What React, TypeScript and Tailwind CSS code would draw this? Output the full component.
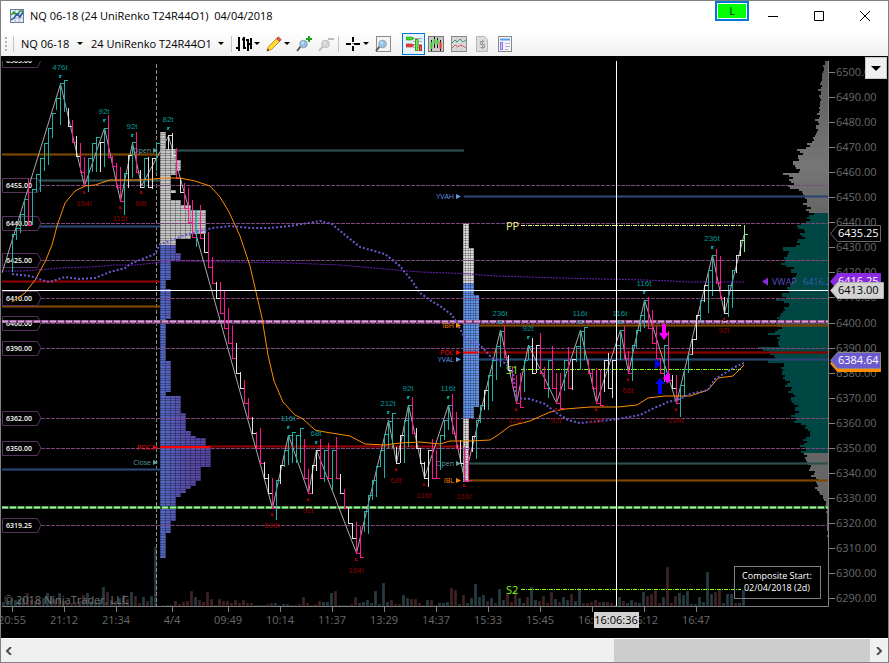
import type { ReactNode } from "react";

type Point = [number, number];

// x, high, low, kind. u/N close at the high, d/n close at the low
const bars = `12 234 272 u|16 228 240 u|20 214 233 u|24 199 222 u|28 179 225 d|32 189 225 u|36 174 192 u|40 158 192 u|44 143 171 u|48 128 165 u|52 113 138 u|56 98 110 u|60 83 125 u|64 80 112 u|68 108 126 n|72 120 142 d|76 136 156 n|80 143 172 d|84 157 185 d|88 158 192 u|92 143 172 u|96 137 172 u|100 142 172 N|104 128 167 u|108 115 157 d|112 156 166 d|116 163 187 d|120 167 201 d|124 173 215 u|128 155 188 N|132 142 178 u|136 132 172 d|140 170 187 n|144 158 188 u|148 157 187 n|152 158 189 N|156 143 171 u|168 135 149 N|172 133 155 n|176 148 178 d|180 178 192 n|184 183 208 d|188 188 222 d|192 200 237 d|196 210 247 u|200 205 238 d|204 234 252 n|208 232 267 d|212 257 283 d|216 282 298 n|220 282 313 d|224 291 328 d|228 308 343 d|232 325 358 d|236 343 373 n|240 372 388 n|244 380 403 d|248 398 418 d|252 417 433 n|256 432 448 d|260 428 463 d|264 462 478 n|268 474 493 n|272 478 508 d|276 480 520 u|280 465 484 N|284 450 467 u|288 435 465 u|292 432 463 u|296 435 463 u|300 428 463 u|304 439 478 d|308 469 493 d|312 465 494 N|316 450 471 N|320 439 478 d|324 450 482 u|328 443 478 d|332 450 490 u|336 437 478 d|340 474 493 n|344 489 508 d|348 508 523 n|352 523 538 n|356 522 553 d|360 526 557 d|364 511 532 u|368 495 534 u|372 480 500 u|376 466 497 u|380 450 467 u|384 434 478 u|388 421 449 u|392 413 448 u|396 447 463 n|400 435 463 N|404 420 463 u|408 405 447 u|412 397 433 d|416 428 448 n|420 448 463 n|424 462 478 n|428 450 487 N|432 439 478 d|436 450 478 d|440 435 470 u|444 420 440 u|448 405 430 u|452 394 433 d|456 412 448 d|460 440 463 n|464 447 481 d|468 450 480 d|472 436 452 N|476 420 459 u|480 405 423 u|484 390 410 N|488 375 410 u|492 360 401 u|496 346 380 u|500 331 367 u|504 326 357 d|508 355 370 n|512 366 387 d|516 375 403 d|520 373 407 d|524 360 392 u|528 346 360 u|532 338 373 n|536 345 373 N|540 333 373 d|544 367 388 d|548 360 398 u|552 346 388 d|556 373 403 d|560 373 408 d|564 360 391 u|568 347 388 d|572 359 390 N|576 346 362 u|580 331 370 u|584 327 360 u|588 359 373 d|592 370 388 d|596 368 403 d|600 369 405 d|604 360 392 N|608 353 388 n|612 360 398 N|616 345 370 u|620 330 360 u|624 326 358 d|628 351 373 d|632 345 381 u|636 330 348 u|640 315 332 u|644 300 328 u|648 297 328 d|652 310 343 d|656 326 358 d|660 358 373 d|664 345 382 u|668 331 380 d|672 375 388 n|676 375 403 d|680 385 417 u|684 369 397 u|688 354 373 u|692 339 355 N|696 315 340 N|700 300 323 u|704 285 302 N|708 270 313 u|712 255 296 u|716 249 283 d|720 256 298 d|724 297 313 n|728 285 317 u|732 270 308 u|736 255 273 N|740 240 256 N`
  .split("|")
  .map((row) => {
    const [x, high, low, kind] = row.split(" ");
    return { x: +x, high: +high, low: +low, kind };
  });

const barPath = (kinds: string) =>
  bars
    .filter((b) => kinds.includes(b.kind))
    .map((b) => {
      const close = b.kind === "u" || b.kind === "N" ? b.high : b.low;
      return `M${b.x + 0.5} ${b.high}V${b.low}M${b.x} ${close + 0.5}h4`;
    })
    .join("");

const swings: [number, number, string][] = [
  [60, 84, "476t"], [84, 186, "-164t"], [104, 128, "92t"], [120, 201, "-116t"], [132, 143, "92t"],
  [141, 186, "-68t"], [168, 136, "82t"], [272, 508, "-596t"], [288, 435, "116t"], [308, 493, "-92t"],
  [316, 450, "68t"], [356, 553, "-164t"], [388, 420, "212t"], [396, 463, "-68t"], [408, 405, "92t"],
  [424, 478, "-116t"], [448, 405, "116t"], [464, 479, "-116t"], [500, 330, "236t"], [516, 403, "-116t"],
  [528, 345, "92t"], [556, 403, "-92t"], [580, 330, "116t"], [596, 403, "-116t"], [620, 330, "116t"],
  [628, 373, "-68t"], [644, 300, "116t"], [676, 403, "-164t"], [712, 255, "236t"], [724, 313, "-92t"],
];

const vwap: Point[] = [
  [2, 271], [22, 271], [50, 269], [60, 268], [90, 267], [115, 265], [135, 265], [155, 263], [170, 261],
  [230, 262], [290, 263], [340, 265], [385, 269], [420, 272], [450, 273], [470, 274], [495, 276],
  [530, 277], [560, 278], [600, 279], [645, 280], [672, 281], [685, 282], [744, 282],
];

const dotted: Point[] = [
  [12, 274], [30, 276], [45, 281], [50, 282], [65, 277], [80, 279], [95, 278], [110, 272], [125, 268],
  [130, 264], [140, 260], [155, 254], [160, 244], [170, 241], [185, 235], [200, 231], [213, 228],
  [230, 226], [250, 228], [270, 228], [290, 226], [320, 221], [332, 224], [345, 235], [360, 247],
  [385, 254], [400, 266], [412, 281], [420, 293], [430, 300], [440, 306], [452, 315], [458, 325],
  [466, 340], [480, 345], [492, 358], [505, 363], [513, 372], [516, 398], [530, 399], [545, 404],
  [555, 412], [568, 420], [580, 423], [600, 421], [618, 419], [640, 415], [652, 409], [668, 402],
  [680, 399], [690, 394], [708, 390], [715, 379], [725, 373], [735, 367], [744, 363],
];

const average: Point[] = [
  [12, 302], [25, 293], [35, 280], [45, 262], [52, 245], [57, 226], [65, 203], [75, 191], [85, 186],
  [95, 185], [110, 180], [140, 180], [165, 178], [180, 178], [195, 181], [210, 186], [220, 197],
  [229, 212], [240, 236], [250, 266], [262, 318], [268, 355], [274, 381], [283, 402], [295, 415],
  [303, 419], [315, 430], [325, 432], [350, 436], [365, 444], [385, 445], [400, 443], [420, 442],
  [440, 444], [450, 441], [470, 441], [490, 440], [498, 435], [510, 426], [530, 421], [550, 412],
  [565, 409], [590, 407], [618, 407], [637, 405], [648, 398], [665, 396], [690, 396], [708, 390],
  [718, 378], [733, 376], [744, 365],
];

// top, bottom, width
const dayOneGrey = [
  [132, 149, 5], [149, 160, 15], [160, 171, 20], [171, 175, 15], [175, 190, 10], [190, 193, 15],
  [193, 200, 10], [200, 205, 20], [205, 210, 30], [210, 234, 45], [234, 239, 30], [239, 245, 15],
];
const dayOneBlue = [
  [245, 253, 15], [253, 260, 20], [260, 280, 10], [280, 289, 5], [289, 319, 10], [319, 361, 5],
  [361, 392, 10], [392, 396, 5], [396, 413, 20], [413, 431, 25], [431, 436, 30], [436, 438, 35],
  [438, 447, 45], [447, 467, 50], [467, 481, 40], [481, 486, 35], [486, 489, 30], [489, 493, 25],
  [493, 497, 20], [497, 521, 15], [521, 533, 10], [533, 558, 5],
];
const dayTwoGrey = [[223, 248, 5], [248, 283, 10], [418, 482, 5]];
const dayTwoBlue = [[283, 295, 10], [295, 407, 15], [407, 418, 10]];

const composite: Point[] = [
  [61, 825], [75, 822], [90, 820], [105, 820], [122, 817], [132, 817], [140, 812], [146, 808],
  [148, 800], [158, 799], [162, 792], [168, 798], [171, 798], [173, 786], [180, 793], [186, 788],
  [190, 801], [197, 806], [205, 806], [212, 811], [220, 808], [225, 797], [230, 804], [240, 800],
  [246, 795], [248, 774], [250, 790], [262, 782], [268, 792], [275, 796], [280, 792], [290, 787],
  [297, 782], [298, 768], [300, 786], [305, 788], [315, 779], [325, 779], [332, 778], [333, 766],
  [335, 779], [345, 778], [347, 760], [352, 768], [355, 777], [360, 765], [363, 783], [373, 782],
  [380, 787], [388, 789], [395, 793], [400, 791], [405, 796], [410, 797], [418, 792], [425, 804],
  [432, 811], [440, 804], [447, 803], [453, 804], [465, 809], [475, 814], [482, 818], [487, 815],
  [492, 820], [500, 825], [515, 827], [550, 828],
];

function compositePath(from: number, to: number) {
  let d = `M829 ${from}`;
  for (let y = from; y < to; y += 2) {
    const i = Math.max(1, composite.findIndex((p) => p[0] > y));
    const [y0, x0] = composite[i - 1];
    const [y1, x1] = composite[i];
    const x = x0 + ((x1 - x0) * (y - y0)) / (y1 - y0);
    const wave = Math.sin(y * 2.1) + Math.sin(y * 0.83) * 0.8;
    const edge = Math.min(828, Math.round(x + wave * Math.min(2, (828 - x) / 8)));
    d += `H${edge}V${Math.min(y + 2, to)}`;
  }
  return `${d}H829Z`;
}

// height of every volume bar from x = 4, one each 4 pixels; r falling, t rising
const volume = `4t 5t 8t 6t 7t 8t 13r 6r 5t 5r 8t 13t 10t 6r 13t 5r 3r 3r 4r 5t 11r 13t 5t 4t 6t 19t 14r 6t 5r 8t 11t 7r 14t 10r 3r 9t 5r 10t 59t 0r 1r 1t 1t 5r 2r 4r 5r 15r 9t 6r 4r 14r 7r 1r 7r 5r 5r 3r 6r 3r 6r 3r 3r 1r 1t 1t 2r 3r 3t 1t 2t 2t 1r 1r 2r 9r 3r 1r 2r 5r 4t 4t 13t 15r 1t 1t 1r 2r 9r 3t 4t 6t 3t 15t 2t 23t 4t 6r 2r 2r 11t 8t 7r 7r 3r 1r 6t 6r 1r 3t 3t 4t 18r 16r 2t 11r 3t 8t 22t 9t 11t 5r 8t 3r 17t 6t 12r 4r 15r 8t 3t 9r 19t 6t 5r 10r 3r 14r 7t 4r 9t 6t 12r 5t 18t 3r 3r 4r 6r 4r 4t 4r 3r 1t 9t 5r 3t 6t 4r 3t 14t 10r 12r 16r 3r 9t 39r 3r 10r 13t 11t 15t 2t 2t 9t 4t 34t 12t 14r 16r 3t 12t 12t 3r 3t 16t`.split(" ");

const tags: [number, string][] = [
  [60, "6505.00"], [185, "6455.00"], [223, "6440.00"], [260, "6425.00"], [298, "6410.00"],
  [323, "6400.00"], [348, "6390.00"], [418, "6362.00"], [448, "6350.00"], [525, "6319.25"],
];

const ORANGE = "#7d4600";
const TEAL = "#2f4f4f";
const BLUE = "#2b4573";
const RED = "#8b0000";

// x1, x2, y, colour
const levels: [number, number, number, string][] = [
  [2, 160, 154, ORANGE], [2, 160, 180, TEAL], [2, 160, 226, BLUE], [2, 160, 281, RED],
  [2, 160, 306, ORANGE], [2, 160, 469, BLUE], [160, 464, 150, TEAL], [160, 464, 446, RED],
  [464, 829, 196, BLUE], [464, 829, 325, ORANGE], [464, 829, 352, RED], [464, 829, 359, BLUE],
  [464, 829, 463, TEAL], [464, 829, 480, ORANGE],
];

const levelNames: [number, number, string, string][] = [
  [151, 150, "Open", "#5f9ea0"], [151, 447, "POC", "#ff0000"], [151, 462, "Close", "#5f9ea0"],
  [454, 196, "YVAH", "#6495ed"], [454, 325, "IBH", "#ff8c00"], [454, 352, "POC", "#ff0000"],
  [454, 359, "YVAL", "#6495ed"], [454, 463, "Open", "#5f9ea0"], [454, 480, "IBL", "#ff8c00"],
];

const pivots: [number, string, string][] = [
  [225, "PP", "#f0f08c"],
  [369, "S1", "#7fff00"],
  [589, "S2", "#7fff00"],
];

const times: [number, string][] = [
  [12, "20:55"], [64, "21:12"], [116, "21:34"], [172, "4/4"], [228, "09:49"], [280, "10:14"],
  [332, "11:37"], [384, "13:29"], [436, "14:37"], [488, "15:33"], [540, "15:45"], [592, "16:01"],
  [644, "16:12"], [696, "16:47"],
];

const prices = Array.from({ length: 22 }, (_, i) => 6500 - i * 10);
const priceY = (price: number) => Math.floor(323 - (price - 6400) * 2.505);
const poly = (points: Point[]) => points.map((p) => p.join(",")).join(" ");

function Rows({ x, rows, fill }: { x: number; rows: number[][]; fill: string }) {
  return (
    <>
      {rows.map(([top, bottom, width]) => (
        <rect key={top} x={x} y={top} width={width + 1} height={bottom - top} fill={fill} />
      ))}
      {rows.map(([top, bottom, width]) => (
        <rect key={top} x={x} y={top} width={width + 1} height={bottom - top} fill="url(#cells)" />
      ))}
    </>
  );
}

function PriceTag({ y, label, fill, color, stroke, wide }: {
  y: number;
  label: string;
  fill: string;
  color: string;
  stroke: string;
  wide?: boolean;
}) {
  const right = wide ? 883 : 880;
  return (
    <g>
      <path d={`M830.5 ${y + 0.5}l7 -8H${right}.5v16H837.5z`} fill={fill} stroke={stroke} />
      <text x="838" y={y + 4} fill={color} className="text-[11px]">{label}</text>
    </g>
  );
}

function Chart() {
  return (
    <svg
      viewBox="1 56 887 582"
      role="img"
      aria-label="NQ 06-18 price chart"
      className="block h-full w-full font-['Open_Sans',sans-serif]"
    >
      <defs>
        <clipPath id="plot"><rect x="2" y="61" width="827" height="545" /></clipPath>
        <pattern id="cells" width="5" height="5" x="160" patternUnits="userSpaceOnUse">
          <path d="M0.5 0V5M0 0.5H5M0 3.5H5" stroke="#000" strokeOpacity="0.28" />
        </pattern>
        <pattern id="cellsTwo" width="5" height="5" x="463" patternUnits="userSpaceOnUse">
          <path d="M0.5 0V5" stroke="#000" strokeOpacity="0.2" />
        </pattern>
        <linearGradient id="dayOne" gradientUnits="userSpaceOnUse" x1="160" x2="212" y1="0" y2="0">
          <stop stopColor="#536ac6" />
          <stop offset="0.4" stopColor="#5752ae" />
          <stop offset="1" stopColor="#54439f" />
        </linearGradient>
        <linearGradient id="outside" gradientUnits="userSpaceOnUse" x1="0" x2="0" y1="61" y2="213">
          <stop stopColor="#595959" />
          <stop offset="0.7" stopColor="#767676" />
          <stop offset="1" stopColor="#666" />
        </linearGradient>
      </defs>

      <g clipPath="url(#plot)">
        {volume.map((v, i) => {
          const h = parseInt(v);
          return (
            <rect key={i} x={i * 4 + 2} y={606 - h} width="3" height={h} stroke="#000" strokeOpacity="0.3"
              fill={v.endsWith("r") ? "#402424" : "#263c44"} />
          );
        })}

        <path d={compositePath(61, 213)} fill="url(#outside)" />
        <path d={compositePath(213, 453)} fill="#004744" />
        <path d={compositePath(453, 550)} fill="#666" />

        <path d="M156.5 64V606" stroke="#8c8c8c" strokeDasharray="4 2" />
        {levels.map(([x1, x2, y, color]) => (
          <g key={`${x1}-${y}`} stroke={color}>
            <path d={`M${x1} ${y + 0.5}H${x2}`} strokeWidth="3" strokeOpacity="0.6" />
            <path d={`M${x1} ${y + 0.5}H${x2}`} />
          </g>
        ))}

        <Rows x={160} rows={dayOneGrey} fill="#c6c6c6" />
        <Rows x={160} rows={dayOneBlue} fill="url(#dayOne)" />
        <Rows x={463} rows={dayTwoGrey} fill="#dcdcdc" />
        <Rows x={463} rows={dayTwoBlue} fill="#6495ed" />
        <rect x="463" y="223" width="15" height="259" fill="url(#cellsTwo)" />
        <path d="M160 447H210M463 352.5H478" stroke="#f00" strokeWidth="2" />

        {tags.map(([y, label]) => (
          <g key={label}>
            <path d={`M41 ${y + 0.5}H829`} stroke="#7d467d" strokeDasharray="4 1" />
            <path d={`M2.5 ${y - 6.5}H37.5L41 ${y}L37.5 ${y + 7.5}H2.5z`} stroke="#5a325f" fill="#000" />
            <text x="6" y={y + 3} fill="#fff" className="text-[7px] font-semibold">{label}</text>
          </g>
        ))}
        <path d="M2 321.5H829" stroke="#6a3f6a" strokeWidth="3" />
        <path d="M2 321.5H829" stroke="#dda0dd" strokeWidth="2" strokeDasharray="6 2" />
        <path d="M2 507.5H829" stroke="#2f5a2f" strokeWidth="3" />
        <path d="M2 507.5H829" stroke="#98fb98" strokeWidth="2" strokeDasharray="6 2" />

        {pivots.map(([y, label, color]) => (
          <g key={label}>
            <text x="506" y={y + 5} fill={color} className="text-[11px]">{label}</text>
            <path d={`M521 ${y + 0.5}H741`} stroke={color} strokeDasharray="4 1 1 1" />
          </g>
        ))}

        <polyline points={poly(vwap)} fill="none" stroke="#6a20b4" strokeDasharray="2 1" />
        <polyline
          points={`2,273 ${swings.map((s) => `${s[0] + 0.5},${s[1]}`).join(" ")} 744,235`}
          fill="none" stroke="#a9a9a9"
        />
        <path d={barPath("u")} stroke="#20b2aa" />
        <path d={barPath("d")} stroke="#ff1493" />
        <path d={barPath("nN")} stroke="#e0e0e0" />
        <path d="M744.5 225V252M741 240.5h3M745 234.5h3" stroke="#90ee90" />
        <polyline points={poly(average)} fill="none" stroke="#ff8c00" />
        <polyline points={poly(dotted)} fill="none" stroke="#6a5acd" strokeWidth="2" strokeDasharray="2 2" />

        {swings.map(([x, y, label]) => {
          const low = label.startsWith("-");
          const my = low ? y + 5 : y - 9;
          return (
            <g key={x} fill={low ? "#8b0000" : "#009696"}>
              <path d={low ? `M${x - 1} ${my}h2v2h1v1h-3z` : `M${x - 1} ${my}h3v1h-1v2h-2z`} />
              <text x={x} y={low ? y + 20 : y - 14} textAnchor="middle"
                className="font-['Liberation_Sans',sans-serif] text-[8px]">
                {label.replace("-", "")}
              </text>
            </g>
          );
        })}

        {levelNames.map(([x, y, label, color]) => (
          <g key={`${label}-${y}`} fill={color}>
            <text x={x} y={y + 3} textAnchor="end" className="text-[7px]">{label}</text>
            <path d={`M${x + 2} ${y - 2}l5 2.5l-5 2.5z`} />
          </g>
        ))}

        <path d="M662 324h4v9h3l-5 7l-5 -7h3zM669 371v3h1v7h-1l-1 3l-5 -6z" fill="#f0f" />
        <path d="M660 378l5 6h-3v10h-4v-10h-3zM655 359l6 5l-6 5z" fill="#00f" />

        <path d="M762 281.5l6 -4v8z" fill="#8a2be2" />
        <text x="772" y="285" fill="#5a4fbf" className="text-[9px]">VWAP</text>
        <text x="803" y="285" fill="#3c5cb4" className="text-[9px]">6416.25</text>
        <path d="M2 290.5H829M616.5 61V606" stroke="#fff" />
        <text x="4" y="604" fill="#757575" className="text-[11px]">© 2018 NinjaTrader, LLC</text>
      </g>

      <rect x="734.5" y="566.5" width="86" height="32" fill="none" stroke="#808080" />
      <text x="777" y="579" textAnchor="middle" fill="#fff" className="text-[9px]">Composite Start:</text>
      <text x="777" y="591" textAnchor="middle" fill="#fff" className="text-[9px]">02/04/2018 (2d)</text>

      <path d="M828.5 61V606.5H2" fill="none" stroke="#808080" />
      {prices.map((price) => (
        <g key={price}>
          <path d={`M829 ${priceY(price)}.5h6`} stroke="#808080" />
          <text x="836" y={priceY(price) + 4} fill="#696969" className="text-[11px]">{price}.00</text>
        </g>
      ))}
      {times.map(([x, label]) => (
        <g key={x}>
          <path d={`M${x}.5 607v5`} stroke="#808080" />
          <text x={x} y="624" textAnchor="middle" fill="#696969" className="text-[11px]">{label}</text>
        </g>
      ))}
      <rect x="594" y="612" width="45" height="16" fill="#d3d3d3" />
      <text x="616" y="624" textAnchor="middle" fill="#000" className="text-[11px]">16:06:36</text>

      <PriceTag y={233} label="6435.25" fill="#000" color="#fff" stroke="#696969" />
      <PriceTag y={281} label="6416.25" fill="#8a2be2" color="#fff" stroke="#8a2be2" />
      <PriceTag y={290} label="6413.00" fill="#d3d3d3" color="#000" stroke="#b0b0b0" wide />
      <PriceTag y={363} label="" fill="#ff8c00" color="#fff" stroke="#ff8c00" />
      <PriceTag y={360} label="6384.64" fill="#6a5acd" color="#fff" stroke="#8a8a8a" />
    </svg>
  );
}

const Caret = () => (
  <svg viewBox="0 0 6 3" className="h-[3px] w-1.5 shrink-0" aria-hidden>
    <path d="M0 0h6L3 3z" />
  </svg>
);

const Separator = () => <span className="h-4 w-px shrink-0 bg-[#c4c4c4]" />;

function Tool({ label, menu, active, disabled, children }: {
  label: string;
  menu?: boolean;
  active?: boolean;
  disabled?: boolean;
  children: ReactNode;
}) {
  return (
    <button
      type="button"
      aria-label={label}
      aria-pressed={active}
      aria-haspopup={menu ? "menu" : undefined}
      disabled={disabled}
      className={
        active
          ? "flex h-[22px] w-[23px] shrink-0 items-center justify-center border border-[#0078d7] bg-[#e8f2fb]"
          : "flex h-[22px] shrink-0 items-center gap-0.5"
      }
    >
      <svg viewBox="0 0 16 16" className="size-4" fill="none" aria-hidden>{children}</svg>
      {menu && <Caret />}
    </button>
  );
}

function Picker({ label, value, width }: { label: string; value: string; width: string }) {
  return (
    <label className="flex shrink-0 items-center">
      <select aria-label={label} className={`${width} appearance-none bg-transparent text-[11px] leading-4 outline-none`}>
        <option>{value}</option>
      </select>
      <Caret />
    </label>
  );
}

const Lens = ({ grey }: { grey?: boolean }) => (
  <>
    <path d="M5 10L1 15" stroke={grey ? "#bbb" : "#555"} strokeWidth="2" />
    <circle cx="7.5" cy="8" r="3.8" fill={grey ? "#d4d4d4" : "#8fc1e8"} stroke={grey ? "#c0c0c0" : "#9aa5b0"} />
    <circle cx="6.6" cy="7" r="1.4" fill={grey ? "#e4e4e4" : "#c9e3f6"} />
  </>
);

function Toolbar() {
  return (
    <div className="flex h-[25px] shrink-0 items-center bg-linear-to-b from-white to-[#efefef] pl-1">
      <svg viewBox="0 0 2 16" className="mr-1.5 h-4 w-0.5" aria-hidden>
        <path d="M1 1V16" stroke="#b4b4b4" strokeWidth="2" strokeDasharray="2 2" />
      </svg>
      <Separator />
      <div className="flex items-center gap-2 px-[7px]">
        <Picker label="Instrument" value="NQ 06-18" width="w-14" />
        <Picker label="Interval" value="24 UniRenko T24R44O1" width="w-[127px]" />
      </div>
      <Separator />
      <div className="flex items-center gap-1.5 px-1">
        <Tool label="Chart style" menu>
          <path d="M3 1V15M0 12h3M8 1V13M6 3.500h2M8 12h2M12 3V15M10 4h2M15 2V13M12 8h4" stroke="#000" strokeWidth="2" />
        </Tool>
        <Tool label="Drawing tools" menu>
          <path d="M1 15l1.500-4.500L11 2l3 3-8.500 8.500z" fill="#ffd83b" stroke="#c58f16" />
          <path d="M10.500 2.500L12.500 1l2.500 2.500-1.500 2z" fill="#e35d55" stroke="#b0423c" />
          <path d="M1 15l.8-2.400 1.600 1.600z" fill="#333" />
        </Tool>
        <Tool label="Zoom in">
          <Lens />
          <path d="M10 3h6M13 0v6" stroke="#18a018" strokeWidth="2" />
        </Tool>
        <Tool label="Zoom out" disabled>
          <Lens grey />
          <path d="M10 3h6" stroke="#bdbdbd" strokeWidth="2" />
        </Tool>
      </div>
      <Separator />
      <div className="flex items-center gap-1.5 px-1.5">
        <Tool label="Cross hair" menu>
          <path d="M1 8h5M9 8h6M8 1v5M8 10v5" stroke="#000" strokeWidth="2" />
          <path d="M7.500 7.500h1" stroke="#000" />
        </Tool>
        <Tool label="Data box">
          <rect x="1.500" y="0.500" width="14" height="15" fill="#f3f3f3" stroke="#8a8a8a" />
          <Lens />
        </Tool>
      </div>
      <div className="ml-0.5"><Separator /></div>
      <div className="flex items-center gap-[7px] pl-[3px]">
        <div className="mr-[-4px]">
          <Tool label="Chart trader" active>
            <path d="M7 2.500h9M7 5.500h9M7 8.500h9M7 11.500h9" stroke="#aaa" />
            <path d="M0 1h6l2 1.500-2 1.500H0z" fill="#44d62c" stroke="#2a8a1a" strokeWidth=".6" />
            <path d="M0 8h6l2 1.500-2 1.500H0z" fill="#f03c3c" stroke="#a02020" strokeWidth=".6" />
            <rect x="9.500" y="3.500" width="2.500" height="11" fill="#7ee35c" stroke="#3d9a22" />
            <rect x="13.500" y="9.500" width="2" height="5" fill="#f06464" stroke="#b03030" />
          </Tool>
        </div>
        <Tool label="Data series">
          <rect x="0.500" y="0.500" width="15" height="15" fill="#c9c9c9" stroke="#777" />
          <path d="M3.500 4V15M6.500 1V12M9.500 2V12M12.500 4V15" stroke="#111" />
          <path d="M3.500 6v7M6.500 3v5M9.500 4v5" stroke="#3ccb28" strokeWidth="2" />
          <path d="M12.500 6v7" stroke="#e33" strokeWidth="2" />
        </Tool>
        <Tool label="Indicators">
          <rect x="0.500" y="0.500" width="15" height="15" fill="#d9d9d9" stroke="#888" />
          <path d="M5.500 1v14M10.500 1v14" stroke="#cacaca" />
          <path d="M1 7l3-3 2 2 3-3 3 3 3-2" stroke="#3b9b72" />
          <path d="M1 12l3-3 3 2 2-2 3 1 3 2" stroke="#d65c5c" />
        </Tool>
        <Tool label="Strategies" disabled>
          <path d="M2.500.5h8l3 3v12h-11z" fill="#dcdcdc" stroke="#b8b8b8" />
          <path d="M10.500 5.500h-4v3h4v3h-4M8.500 4v9" stroke="#999" />
        </Tool>
        <Tool label="Properties">
          <rect x="1.500" y="0.500" width="13" height="15" fill="#f5f5ff" stroke="#888" />
          <path d="M3 3.500h10" stroke="#5a9fe0" strokeWidth="2" />
          <rect x="3.500" y="6.500" width="2" height="7" fill="#d8c8ff" stroke="#8e6ff0" />
          <path d="M8 7.500h5M8 10.500h5M8 13.500h3" stroke="#b4b4c4" />
        </Tool>
      </div>
    </div>
  );
}

function TitleBar() {
  return (
    <header className="flex h-[30px] shrink-0 items-center bg-white pl-[9px]">
      <svg viewBox="0 0 14 14" className="size-3.5" fill="none" aria-hidden>
        <rect x="0.500" y="0.500" width="13" height="13" fill="#e8edf5" stroke="#6b7f9c" />
        <path d="M1 5h12M1 9h12M5 1v12M9 1v12" stroke="#aab8cc" />
        <path d="M1 6l3-3 3 3 3-4 3 0" stroke="#2c9b3e" strokeWidth="1.500" />
        <path d="M1 11l3-2 3-4 3 3 3-5" stroke="#2456a6" strokeWidth="1.500" />
      </svg>
      <h1 className="ml-1.5 flex-1 text-[11px] leading-4 whitespace-pre">
        NQ 06-18 (24 UniRenko T24R44O1){"  "}04/04/2018
      </h1>
      <button
        type="button"
        aria-label="Link"
        className="mr-px h-5 w-[34px] self-start border-2 border-[#0078d7] bg-white p-px text-[10px] leading-[14px]"
      >
        <span className="block bg-[#00ff00]">L</span>
      </button>
      {[
        ["Minimize", "M0 5.5h10"],
        ["Maximize", "M.5 .5h9v9h-9z"],
        ["Close", "M0 0l10 10M10 0L0 10"],
      ].map(([label, d]) => (
        <button key={label} type="button" aria-label={label} className="flex h-full w-[46px] items-center justify-center">
          <svg viewBox="0 0 10 10" className="size-2.5" fill="none" stroke="#000" aria-hidden>
            <path d={d} />
          </svg>
        </button>
      ))}
    </header>
  );
}

export default function App() {
  return (
    <div className="flex h-screen w-full flex-col overflow-hidden border border-[#808080] bg-black font-['Open_Sans',sans-serif] text-black">
      <TitleBar />
      <Toolbar />
      <main className="relative min-h-0 flex-1">
        <Chart />
        <button
          type="button"
          aria-label="Chart options"
          className="absolute top-px right-px flex size-[22px] items-center justify-center border border-[#c8c8c8] bg-[#f0f0f0]"
        >
          <svg viewBox="0 0 10 5" className="h-[5px] w-2.5" aria-hidden><path d="M0 0h10L5 5z" /></svg>
        </button>
      </main>
      <footer className="flex h-6 shrink-0 border-t border-white bg-[#f0f0f0]">
        <button type="button" aria-label="Scroll left" className="flex w-4 items-center justify-center">
          <svg viewBox="0 0 6 8" className="h-2 w-1.5" fill="none" stroke="#505050" strokeWidth="2" aria-hidden>
            <path d="M5 0L1 4l4 4" />
          </svg>
        </button>
        <div className="flex flex-1">
          <div className="flex-[7]" />
          <div className="flex-[3] bg-[#cdcdcd]" />
        </div>
        <button type="button" aria-label="Scroll right" className="flex w-[18px] items-center justify-center">
          <svg viewBox="0 0 6 8" className="h-2 w-1.5" fill="none" stroke="#505050" strokeWidth="2" aria-hidden>
            <path d="M1 0l4 4-4 4" />
          </svg>
        </button>
      </footer>
    </div>
  );
}
